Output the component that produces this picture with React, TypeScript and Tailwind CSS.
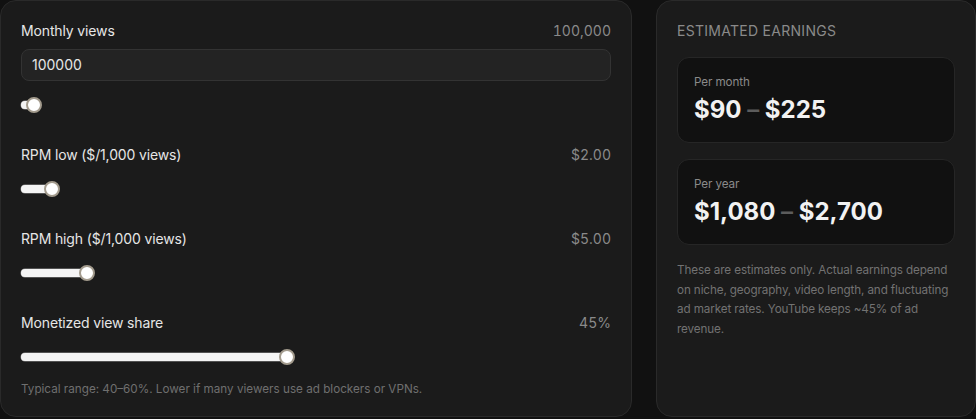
import React from 'react';

interface SliderRowProps {
  label: string;
  value: string;
  fill: number;
}

const Slider: React.FC<{ fill: number }> = ({ fill }) => (
  <div className="relative h-4 w-full">
    <div
      className="absolute left-0 top-1/2 h-2 -translate-y-1/2 rounded-full bg-[#f4f4f4] shadow-[0_0_0_0.5px_#8a8a8a]"
      style={{ width: fill }}
    />
    <div
      className="absolute top-0 h-4 w-4 -translate-x-1/2 rounded-full border-2 border-[#a39b8d] bg-white"
      style={{ left: fill }}
    />
  </div>
);

const SliderRow: React.FC<SliderRowProps> = ({ label, value, fill }) => (
  <div>
    <div className="flex items-center justify-between text-sm leading-5">
      <span className="tracking-[-0.01em] text-[#e6e6e6]">{label}</span>
      <span className="tabular-nums text-[#8a8a8a]">{value}</span>
    </div>
    <div className="mt-4">
      <Slider fill={fill} />
    </div>
  </div>
);

const EarningsCard: React.FC<{ label: string; low: string; high: string }> = ({ label, low, high }) => (
  <div className="rounded-xl border border-[#262626] bg-[#111111] p-4">
    <div className="text-[11.7px] leading-4 tracking-[-0.01em] text-[#8a8a8a]">{label}</div>
    <div className="mt-1 text-2xl font-bold leading-8 text-[#f2f2f2]">
      {low} <span className="font-semibold text-[#5c5c5c]">–</span> {high}
    </div>
  </div>
);

export default function App() {
  return (
    <div
      className="flex h-[419px] w-[976px] gap-6 overflow-hidden bg-[#111111]"
      style={{ fontFamily: 'Inter, "Liberation Sans", sans-serif' }}
    >
      <div className="h-[417px] w-[632px] shrink-0 rounded-2xl border border-[#2a2a2a] bg-[#1b1b1b] p-5">
        <div className="space-y-8">
          <div>
            <div className="flex items-center justify-between text-sm leading-5">
              <span className="tracking-[-0.01em] text-[#e6e6e6]">Monthly views</span>
              <span className="tabular-nums text-[#8a8a8a]">100,000</span>
            </div>
            <div className="mt-2 flex h-8 items-center rounded-lg border border-[#333333] bg-[#232323] px-2.5 text-sm text-[#e6e6e6]">
              100000
            </div>
            <div className="mt-4">
              <Slider fill={13} />
            </div>
          </div>
          <SliderRow label="RPM low ($/1,000 views)" value="$2.00" fill={31} />
          <SliderRow label="RPM high ($/1,000 views)" value="$5.00" fill={66} />
          <SliderRow label="Monetized view share" value="45%" fill={266} />
        </div>
        <p className="mt-4 text-[11.7px] leading-4 text-[#6f6f6f]">
          Typical range: 40–60%. Lower if many viewers use ad blockers or VPNs.
        </p>
      </div>

      <div className="h-[417px] flex-1 rounded-2xl border border-[#2a2a2a] bg-[#1b1b1b] p-5">
        <div className="text-sm uppercase leading-5 tracking-[0.02em] text-[#8a8a8a]">Estimated earnings</div>
        <div className="mt-4 space-y-4">
          <EarningsCard label="Per month" low="$90" high="$225" />
          <EarningsCard label="Per year" low="$1,080" high="$2,700" />
        </div>
        <p className="mt-4 text-[11.7px] leading-[19.5px] tracking-[-0.01em] text-[#727272]">
          These are estimates only. Actual earnings depend on niche, geography, video length, and fluctuating ad
          market rates. YouTube keeps ~45% of ad revenue.
        </p>
      </div>
    </div>
  );
}
